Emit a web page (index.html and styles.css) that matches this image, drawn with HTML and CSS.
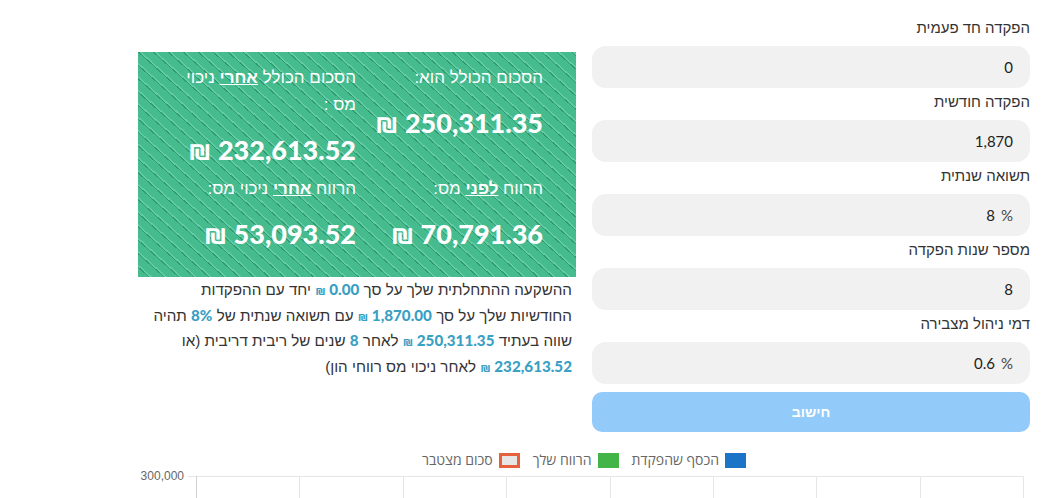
FILE: index.html
```html
<!DOCTYPE html>
<html lang="he" dir="rtl">
    <head>
        <meta charset="utf-8"/>
        <title>מחשבון ריבית דריבית</title>
        <link rel="stylesheet" href="styles.css">
    </head>
    <body>
        <div id="calc">
            <div class="top">
                <form class="inputs">
                    <label>הפקדה חד פעמית</label>
                    <div class="field"><input type="text" value="0"></div>

                    <label>הפקדה חודשית</label>
                    <div class="field"><input type="text" value="1,870"></div>

                    <label>תשואה שנתית</label>
                    <div class="field"><span class="unit">%</span><input type="text" value="8"></div>

                    <label>מספר שנות הפקדה</label>
                    <div class="field"><input type="text" value="8"></div>

                    <label>דמי ניהול מצבירה</label>
                    <div class="field"><span class="unit">%</span><input type="text" value="0.6"></div>

                    <button type="button">חישוב</button>
                </form>

                <div class="results">
                    <div class="summary">
                        <div class="cell">
                            <div class="lbl">הסכום הכולל הוא:</div>
                            <div class="num">250,311.35 ₪</div>
                        </div>
                        <div class="cell">
                            <div class="lbl">הסכום הכולל <u>אחרי</u> ניכוי מס :</div>
                            <div class="num">232,613.52 ₪</div>
                        </div>
                        <div class="cell">
                            <div class="lbl">הרווח <u>לפני</u> מס:</div>
                            <div class="num">70,791.36 ₪</div>
                        </div>
                        <div class="cell">
                            <div class="lbl">הרווח <u>אחרי</u> ניכוי מס:</div>
                            <div class="num">53,093.52 ₪</div>
                        </div>
                    </div>
                    <p class="explain">ההשקעה ההתחלתית שלך על סך <b>0.00 <small>₪</small></b> יחד עם ההפקדות החודשיות שלך על סך <b>1,870.00 <small>₪</small></b> עם תשואה שנתית של <b>8%</b> תהיה שווה בעתיד <b>250,311.35 <small>₪</small></b> לאחר <b>8</b> שנים של ריבית דריבית (או <b>232,613.52 <small>₪</small></b> לאחר ניכוי מס רווחי הון)</p>
                </div>
            </div>

            <div class="chart">
                <ul class="legend">
                    <li><span class="box blue"></span>הכסף שהפקדת</li>
                    <li><span class="box green"></span>הרווח שלך</li>
                    <li><span class="box total"></span>סכום מצטבר</li>
                </ul>
                <svg class="plot" width="892" height="28" viewBox="0 0 892 28" direction="ltr">
                    <text x="46" y="10" text-anchor="end">300,000</text>
                    <line x1="50" y1="6.5" x2="885" y2="6.5" class="grid"/>
                    <line x1="58.5" y1="6" x2="58.5" y2="28" class="axis"/>
                    <line x1="161.5" y1="6" x2="161.5" y2="28" class="grid"/>
                    <line x1="265.5" y1="6" x2="265.5" y2="28" class="grid"/>
                    <line x1="368.5" y1="6" x2="368.5" y2="28" class="grid"/>
                    <line x1="472.5" y1="6" x2="472.5" y2="28" class="grid"/>
                    <line x1="575.5" y1="6" x2="575.5" y2="28" class="grid"/>
                    <line x1="678.5" y1="6" x2="678.5" y2="28" class="grid"/>
                    <line x1="782.5" y1="6" x2="782.5" y2="28" class="grid"/>
                    <line x1="885.5" y1="6" x2="885.5" y2="28" class="grid"/>
                </svg>
            </div>
        </div>
    </body>
</html>
```

FILE: styles.css
```css
* {
    margin: 0;
    padding: 0;
    box-sizing: border-box;
}

body {
    font-family: "Liberation Sans", "Open Sans", "DejaVu Sans", sans-serif;
    color: #333;
    background: #fff;
}

#calc {
    width: 892px;
    margin: 16px 28px 0 auto;
}

.top {
    display: grid;
    grid-template-columns: 438px 438px;
    column-gap: 16px;
}

/* form column */
.inputs label {
    display: block;
    font-size: 15px;
    line-height: 24px;
    margin: 2px 0 6px;
    color: #333;
}

.inputs label:first-child {
    margin-top: 0;
}

.field {
    display: flex;
    align-items: center;
    height: 42px;
    padding: 0 17px;
    background: #f1f1f1;
    border-radius: 14px;
}

.field input {
    flex: 1;
    min-width: 0;
    border: 0;
    outline: 0;
    background: transparent;
    text-align: right;
    font-family: "Lato", "Liberation Sans", sans-serif;
    font-size: 15px;
    color: #222;
}

.field .unit {
    font-family: "Lato", "Liberation Sans", sans-serif;
    font-size: 15px;
    color: #444;
    margin-left: 6px;
}

.inputs button {
    display: block;
    width: 100%;
    height: 40px;
    margin-top: 8px;
    border: 0;
    border-radius: 10px;
    background: #92caf9;
    color: #fff;
    font-family: "Liberation Sans", sans-serif;
    font-weight: bold;
    font-size: 14px;
}

/* results column */
.results {
    margin-top: 36px;
}

.summary {
    display: grid;
    grid-template-columns: minmax(0, 1fr) minmax(0, 1fr);
    column-gap: 2px;
    row-gap: 7px;
    padding: 12px 33px 25px;
    color: #fff;
    background-color: #45bb8e;
    background-image: repeating-linear-gradient(42deg,
        #45bb8e 0px, #45bb8e 7px,
        #2f9b73 7px, #2f9b73 8px,
        #62cda5 8px, #62cda5 9.5px,
        #45bb8e 9.5px, #45bb8e 10px);
}

.summary .lbl {
    font-size: 17px;
    line-height: 27px;
}

.summary .lbl u {
    font-weight: bold;
}

.summary .num {
    margin-top: 14px;
    font-family: "Lato", "Liberation Sans", sans-serif;
    font-weight: 900;
    font-size: 27px;
    line-height: 36px;
    white-space: nowrap;
}

.explain {
    padding: 0 4px;
    font-size: 15.2px;
    line-height: 25.5px;
    color: #333;
}

.explain b {
    color: #3a9fc4;
    font-family: "Lato", "Liberation Sans", sans-serif;
    font-weight: 900;
    line-height: 1;
}

.explain small {
    font-size: 12px;
}

/* chart */
.chart {
    margin-top: 20px;
}

.legend {
    display: flex;
    justify-content: center;
    gap: 13px;
    list-style: none;
    font-family: "Open Sans", "Liberation Sans", sans-serif;
    font-size: 14px;
    line-height: 16px;
    color: #666;
}

.legend li {
    display: flex;
    align-items: center;
    gap: 6px;
}

.box {
    display: inline-block;
    width: 21px;
    height: 15px;
}

.box.blue {
    background: #1c74c6;
}

.box.green {
    background: #43b548;
}

.box.total {
    background: #e6e6e6;
    border: 3px solid #e6603e;
}

.plot {
    display: block;
    margin-top: 2px;
}

.plot text {
    font-family: "Liberation Sans", sans-serif;
    font-size: 12px;
    fill: #666;
}

.plot .grid {
    stroke: #e6e6e6;
    stroke-width: 1;
}

.plot .axis {
    stroke: #d2d2d2;
    stroke-width: 1;
}
```
